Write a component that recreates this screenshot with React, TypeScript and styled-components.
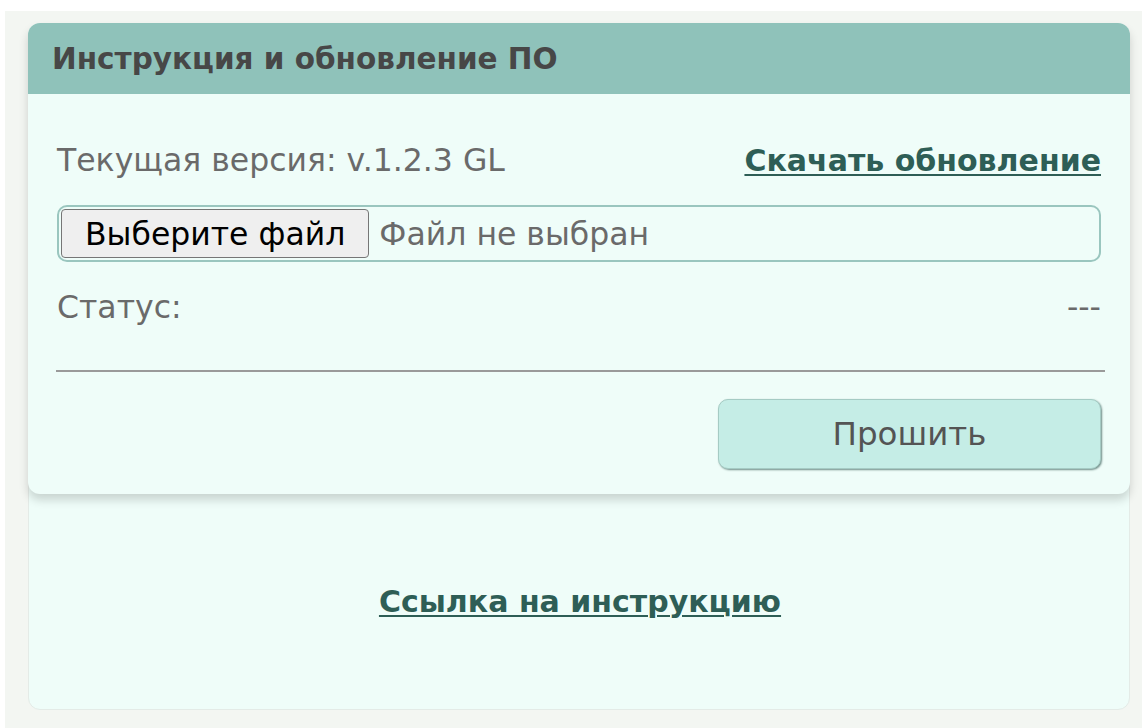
import styled, { createGlobalStyle } from 'styled-components';

const GlobalStyle = createGlobalStyle`
  body {
    margin: 0;
    background: #ffffff;
    font-family: "DejaVu Sans", Roboto, sans-serif;
  }
`;

const Page = styled.div`
  padding: 11px 0 0 5px;
`;

const Panel = styled.div`
  background: #f3f6f2;
  height: 717px;
  box-sizing: border-box;
  padding: 12px 12px 18px 23px;
`;

const Card = styled.div`
  width: 1102px;
  height: 687px;
  box-sizing: border-box;
  background: #effdf9;
  border: 1px solid #e4ebe7;
  border-radius: 12px;
  display: flex;
  flex-direction: column;
`;

const Section = styled.div`
  border-radius: 12px;
  background: #effdf9;
  box-shadow: 0 6px 10px rgba(0, 0, 0, 0.16);
  margin: -1px -1px 0 -1px;
`;

const Header = styled.div`
  height: 71px;
  display: flex;
  align-items: center;
  padding-left: 24px;
  background: #8fc2ba;
  border-radius: 12px 12px 0 0;
  color: #474747;
  font-weight: 700;
  font-size: 29.5px;
`;

const Body = styled.div`
  padding: 46px 29px 25px 29px;
`;

const Row = styled.div`
  height: 40px;
  display: flex;
  align-items: center;
  justify-content: space-between;
  color: #6a6a6a;
  font-size: 31.5px;
`;

const Link = styled.a`
  color: #2e5e56;
  font-weight: 700;
  font-size: 30px;
  text-decoration: underline;
  text-underline-offset: 3px;
  text-decoration-thickness: 2px;
  cursor: pointer;
`;

const FileBox = styled.label`
  margin-top: 25px;
  height: 57px;
  box-sizing: border-box;
  display: flex;
  align-items: center;
  gap: 10px;
  padding-left: 2px;
  border: 2px solid #9ac6bf;
  border-radius: 10px;
  cursor: pointer;
`;

const FileButton = styled.span`
  height: 49px;
  box-sizing: border-box;
  display: flex;
  align-items: center;
  padding: 0 23px;
  background: #efefef;
  border: 1px solid #767676;
  border-radius: 4px;
  color: #000000;
  font-size: 31.5px;
`;

const FileName = styled.span`
  color: #6a6a6a;
  font-size: 31.5px;
`;

const StatusRow = styled(Row)`
  margin-top: 25px;
`;

const Divider = styled.hr`
  margin: 43px -4px 0 -1px;
  border: none;
  border-top: 2px solid #9a9a9a;
`;

const Actions = styled.div`
  margin-top: 27px;
  display: flex;
  justify-content: flex-end;
`;

const FlashButton = styled.button`
  width: 383px;
  height: 70px;
  background: #c5ede6;
  border: 1px solid #a5cbc4;
  border-radius: 10px;
  box-shadow: 1px 1px 2px #6e8c87;
  color: #545454;
  font-family: "DejaVu Sans", Roboto, sans-serif;
  font-size: 32.5px;
  cursor: pointer;
`;

const Footer = styled.div`
  flex: 1;
  display: flex;
  align-items: center;
  justify-content: center;
  padding-left: 2px;
`;

export default function App() {
  return (
    <>
      <GlobalStyle />
      <Page>
        <Panel>
          <Card>
            <Section>
              <Header>Инструкция и обновление ПО</Header>
              <Body>
                <Row>
                  <span>Текущая версия: v.1.2.3 GL</span>
                  <Link>Скачать обновление</Link>
                </Row>
                <FileBox>
                  <FileButton>Выберите файл</FileButton>
                  <FileName>Файл не выбран</FileName>
                </FileBox>
                <StatusRow>
                  <span>Статус:</span>
                  <span>---</span>
                </StatusRow>
                <Divider />
                <Actions>
                  <FlashButton>Прошить</FlashButton>
                </Actions>
              </Body>
            </Section>
            <Footer>
              <Link>Ссылка на инструкцию</Link>
            </Footer>
          </Card>
        </Panel>
      </Page>
    </>
  );
}
